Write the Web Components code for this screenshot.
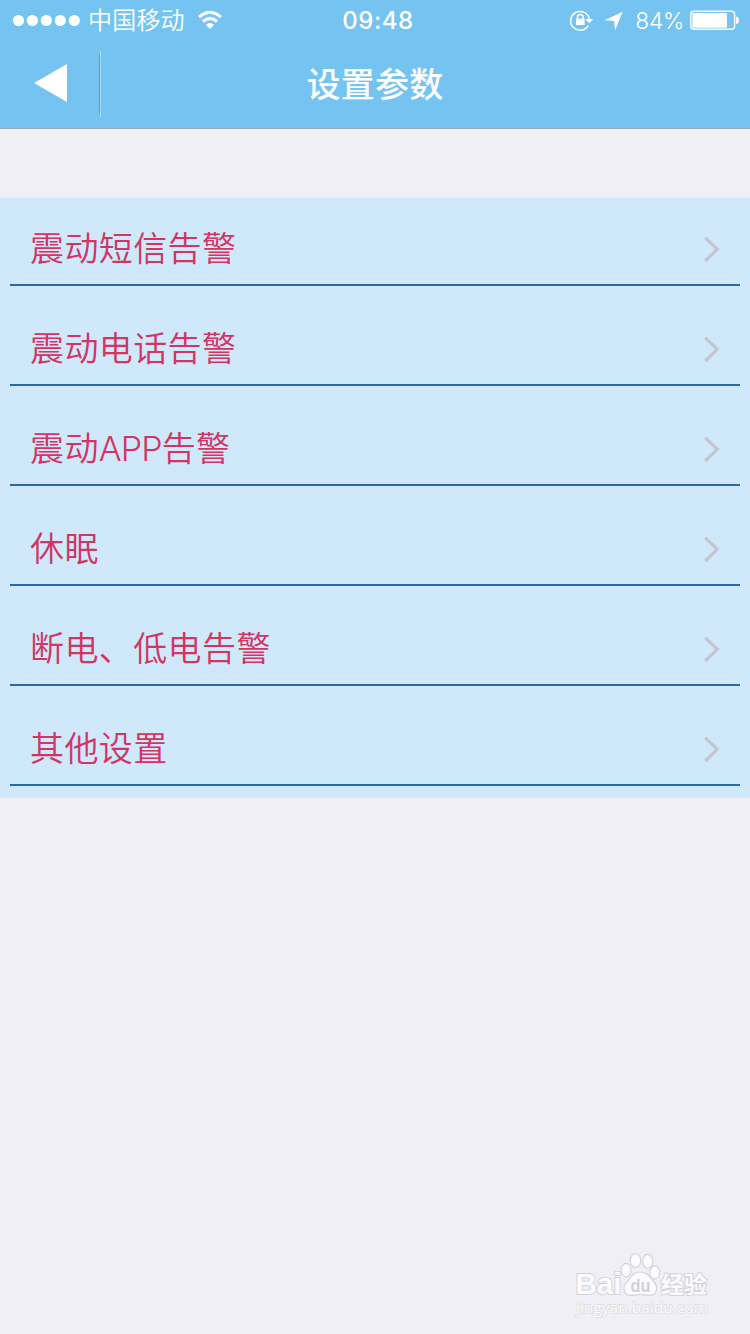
<!DOCTYPE html>
<html lang="zh-CN">
<head>
<meta charset="utf-8">
<title>设置参数</title>
<style>
body{margin:0;background:#efeff5;font-family:Inter,"Noto Sans CJK SC",sans-serif}
</style>
</head>
<body>
<settings-screen></settings-screen>
<script>
const define = (name, html) => customElements.define(name, class extends HTMLElement {
  constructor() {
    super();
    const t = document.createElement('template');
    t.innerHTML = html;
    this.attachShadow({mode: 'open'}).append(t.content.cloneNode(true));
  }
});

define('status-bar', `
<style>
:host{display:grid;grid-template-columns:1fr auto 1fr;height:40px;align-items:center;color:#fff;font-size:24px;line-height:40px;padding:0 11px 0 12px;box-sizing:border-box}
.l,.r{display:flex;align-items:center;height:40px}
.r{justify-content:flex-end}
svg{display:block;flex:none}
.carrier{margin:-2px 0 0 8px;font-family:"Noto Sans CJK SC",sans-serif;font-weight:350;letter-spacing:.2px}
.time{font-weight:500;font-size:24px;letter-spacing:.55px;padding-left:5px;position:relative;top:1px}
.pct{font-weight:350;margin:2px 6px 0 12px;letter-spacing:-.3px;font-size:22.8px}
</style>
<div class="l">
<svg width="68" height="40" fill="#fff"><circle cx="6.5" cy="20.5" r="5.6"/><circle cx="20.4" cy="20.5" r="5.6"/><circle cx="34.3" cy="20.5" r="5.6"/><circle cx="48.3" cy="20.5" r="5.6"/><circle cx="62.3" cy="20.5" r="5.6"/></svg>
<span class="carrier">中国移动</span>
<svg style="margin-left:12px" width="26" height="40" fill="none" stroke="#fff" stroke-width="3.1"><path d="M2 17.2Q13 7.5 24 17.2M6 21.5Q13 15.2 20 21.5"/><path d="M8.8 24.8Q13 21.2 17.2 24.8L13 29Z" fill="#fff" stroke="none"/></svg>
</div>
<span class="time">09:48</span>
<div class="r">
<svg width="26" height="40" fill="none" stroke="#fff" stroke-width="1.5"><path d="M20.2 25.6A9.4 9.4 0 1 1 21.3 19"/><path d="M17.3 19H25.2L21.2 23.3Z" fill="#fff" stroke="none"/><path d="M9.4 19v-1.6a2.9 2.9 0 0 1 5.8 0V19"/><rect x="8" y="18.6" width="8.6" height="6.4" rx=".6" fill="#fff" stroke="none"/></svg>
<svg style="margin-left:10px" width="20" height="40" fill="#fff"><path d="M18.7 11.7 11.2 30 10 20.9 .6 20.2Z"/></svg>
<span class="pct" style="margin-left:11px">84%</span>
<svg width="49" height="40"><rect x=".8" y="11.3" width="43.8" height="18" rx="3" fill="none" stroke="#fff" stroke-width="1.4"/><rect x="2.4" y="13" width="34.6" height="14.8" rx="1.3" fill="#fff"/><path d="M46 16.6q3 .7 3 3.8t-3 3.8Z" fill="#fff"/></svg>
</div>`);

define('nav-bar', `
<style>
:host{display:grid;grid-template-columns:99px 1fr 99px;height:88px;align-items:center;color:#fff}
.back{height:88px;display:flex;align-items:center;justify-content:flex-end}
.rule{width:1px;height:66px;background:linear-gradient(transparent,#5d9cc2 12%,#5d9cc2 88%,transparent);border-right:1px solid #a8dcf6;margin-right:-2px;margin-top:-1px}
svg{margin-right:32px;margin-top:-2px}
h1{margin:-2px 0 0;font:500 34px/50px "Noto Sans CJK SC",sans-serif;text-align:center;letter-spacing:.2px}
</style>
<div class="back"><svg width="33" height="38"><path d="M33 0V38L0 19Z" fill="#fff"/></svg><i class="rule"></i></div>
<h1><slot></slot></h1>`);

define('setting-row', `
<style>
:host{display:block;height:100px;padding:0 10px 12px;box-sizing:border-box}
.in{height:88px;box-sizing:border-box;border-bottom:2px solid #296aa5;display:flex;align-items:center;justify-content:space-between;padding:15px 19px 0 20px}
.label{color:#d13562;font-size:34px;line-height:50px;letter-spacing:.4px;font-weight:350}
::slotted(span){letter-spacing:-.9px}
svg{display:block}
</style>
<div class="in"><span class="label"><slot></slot></span><svg width="18" height="28" fill="none" stroke="#c3c6cf" stroke-width="3.2"><path d="M2.2 2.6 14.2 14.3 2.2 26"/></svg></div>`);

define('site-watermark', `
<style>
:host{display:block;position:absolute;left:570px;top:1248px;width:150px;height:76px}
svg{display:block}
text{fill:#fcfcfe;stroke:#d3d3da;stroke-width:2px;paint-order:stroke}
</style>
<svg width="150" height="76">
<text x="5.5" y="46" font-family="Liberation Sans" font-weight="700" font-size="30" textLength="46" lengthAdjust="spacingAndGlyphs">Bai</text>
<g fill="#fcfcfe" stroke="#d3d3da" stroke-width="1.2"><ellipse cx="56" cy="22" rx="5" ry="6.7"/><ellipse cx="65.5" cy="12.5" rx="5.3" ry="7"/><ellipse cx="77.7" cy="13.2" rx="5.2" ry="6.8"/><ellipse cx="84.8" cy="24.4" rx="5" ry="6.5"/><path d="M70 24C62 24 60 31 56 35 52 40 54 47 61 47.4 65 47.4 67 46.5 70 46.5 74 46.5 77 47.5 81 47.2 87 46 88.5 39.5 84 34 80 30 78 24 70 24Z"/></g>
<text x="60.5" y="44" font-family="Liberation Sans" font-weight="700" font-size="18" textLength="20" lengthAdjust="spacingAndGlyphs" style="fill:#d0d0d8;stroke:none">du</text>
<text x="91" y="45" font-family="Noto Sans CJK SC" font-weight="700" font-size="23">经验</text>
<text x="6" y="65" font-family="Open Sans" font-size="15" textLength="132" lengthAdjust="spacingAndGlyphs" style="stroke-width:1.3px;stroke:#dadae1">jingyan.baidu.com</text>
</svg>`);

define('settings-screen', `
<style>
:host{display:block;position:relative;height:1334px;background:#efeff5;overflow:hidden}
header{background:#75c3f0;height:129px;box-sizing:border-box;border-bottom:1px solid #9aabb9}
main{margin-top:69px;background:#cfe8fa}
</style>
<header><status-bar></status-bar><nav-bar>设置参数</nav-bar></header>
<main>
<setting-row>震动短信告警</setting-row>
<setting-row>震动电话告警</setting-row>
<setting-row>震动<span>APP</span>告警</setting-row>
<setting-row>休眠</setting-row>
<setting-row>断电、低电告警</setting-row>
<setting-row>其他设置</setting-row>
</main>
<site-watermark></site-watermark>`);
</script>
</body>
</html>
